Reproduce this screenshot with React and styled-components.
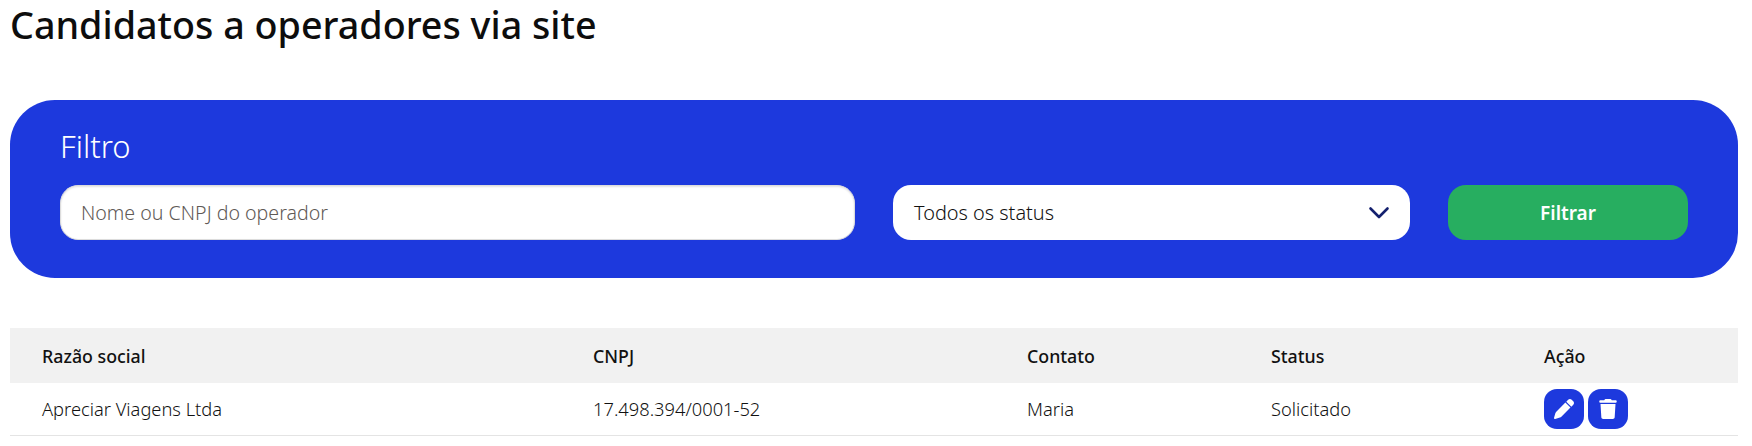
import React from 'react';
import styled, { createGlobalStyle } from 'styled-components';
import { FaPen, FaTrash } from 'react-icons/fa6';

const GlobalStyle = createGlobalStyle`
  html, body {
    margin: 0;
    padding: 0;
    background: #fff;
    font-family: "Noto Sans", "Open Sans", sans-serif;
    color: #111;
  }
`;

const Page = styled.div`
  padding: 0 14px 0 10px;
`;

const Title = styled.h1`
  margin: 0;
  height: 100px;
  font-size: 37.7px;
  line-height: 50px;
  font-weight: 500;
  color: #0d0d0d;
`;

const FilterPanel = styled.section`
  box-sizing: border-box;
  height: 178px;
  padding: 26px 50px 0;
  border-radius: 45px;
  background: #1d39dd;
`;

const FilterTitle = styled.h2`
  margin: 0 0 19px;
  font-size: 31px;
  line-height: 40px;
  font-weight: 300;
  color: #fff;
`;

const FilterRow = styled.div`
  display: grid;
  grid-template-columns: 795px 517px 240px;
  gap: 38px;
`;

const TextInput = styled.input`
  box-sizing: border-box;
  height: 55px;
  width: 100%;
  padding: 0 20px;
  border: 1px solid #dcdcdc;
  border-radius: 18px;
  background: #fff;
  box-shadow: inset 0 1px 2px rgba(0, 0, 0, 0.12);
  font: 300 19.6px "Noto Sans", sans-serif;
  outline: none;

  &::placeholder {
    color: #5f5a56;
    opacity: 1;
  }
`;

const SelectBox = styled.div`
  box-sizing: border-box;
  height: 55px;
  padding: 0 20px 0 21px;
  display: flex;
  align-items: center;
  justify-content: space-between;
  border-radius: 18px;
  background: #fff;
  font-size: 19.9px;
  font-weight: 300;
  color: #111;
`;

const FilterButton = styled.button`
  height: 55px;
  border: 0;
  border-radius: 18px;
  background: #27ae60;
  color: #fff;
  font: 600 19px "Noto Sans", sans-serif;
`;

const Table = styled.div`
  margin-top: 50px;
`;

const Row = styled.div`
  display: grid;
  grid-template-columns: 551px 434px 244px 273px 1fr;
  align-items: center;
  height: ${p => (p.$head ? '55px' : '52px')};
  background: ${p => (p.$head ? '#f1f1f1' : '#fff')};
  border-bottom: ${p => (p.$head ? '0' : '1px solid #e4e4e4')};
  font-size: ${p => (p.$head ? '17.8px' : '18.3px')};
  font-weight: ${p => (p.$head ? 500 : 300)};
  color: #111;
`;

const Cell = styled.div`
  padding-left: 32px;
`;

const TextCell = styled(Cell)`
  margin-top: -2px;
`;

const Actions = styled(Cell)`
  display: flex;
  gap: 4px;
`;

const IconButton = styled.button`
  width: 40px;
  height: 40px;
  padding: 0;
  display: flex;
  align-items: center;
  justify-content: center;
  border: 0;
  border-radius: 13px;
  background: #1d39dd;
  color: #fff;
  font-size: 20px;
`;

export default function App() {
  return (
    <Page>
      <GlobalStyle />
      <Title>Candidatos a operadores via site</Title>
      <FilterPanel>
        <FilterTitle>Filtro</FilterTitle>
        <FilterRow>
          <TextInput placeholder="Nome ou CNPJ do operador" />
          <SelectBox>
            Todos os status
            <svg width="22" height="14" viewBox="0 0 22 14" fill="none" stroke="#14206e" strokeWidth="2.6" strokeLinecap="round" strokeLinejoin="round">
              <path d="M2.5 2.5 11 11 19.5 2.5" />
            </svg>
          </SelectBox>
          <FilterButton>Filtrar</FilterButton>
        </FilterRow>
      </FilterPanel>
      <Table>
        <Row $head>
          <Cell>Razão social</Cell>
          <Cell>CNPJ</Cell>
          <Cell>Contato</Cell>
          <Cell>Status</Cell>
          <Cell>Ação</Cell>
        </Row>
        <Row>
          <TextCell>Apreciar Viagens Ltda</TextCell>
          <TextCell>17.498.394/0001-52</TextCell>
          <TextCell>Maria</TextCell>
          <TextCell>Solicitado</TextCell>
          <Actions>
            <IconButton aria-label="Editar"><FaPen /></IconButton>
            <IconButton aria-label="Excluir"><FaTrash /></IconButton>
          </Actions>
        </Row>
      </Table>
    </Page>
  );
}
